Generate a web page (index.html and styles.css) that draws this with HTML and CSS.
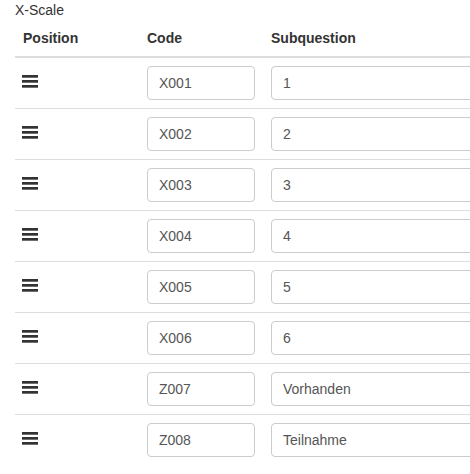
FILE: index.html
```html
<!DOCTYPE html>
<html>
<head>
<meta charset="utf-8">
<link rel="stylesheet" href="styles.css">
</head>
<body>
<div class="page">
  <table class="grid">
    <caption class="caption">X-Scale</caption>
    <colgroup>
      <col class="col-pos">
      <col class="col-code">
      <col class="col-sub">
    </colgroup>
    <thead>
      <tr>
        <th>Position</th>
        <th>Code</th>
        <th>Subquestion</th>
      </tr>
    </thead>
    <tbody>
      <tr>
        <td><svg class="handle" viewBox="0 0 16 13" width="16" height="13"><rect x="0" y="0" width="16" height="2.7"/><rect x="0" y="5" width="16" height="2.7"/><rect x="0" y="10" width="16" height="2.7"/></svg></td>
        <td><input class="field" type="text" value="X001"></td>
        <td><input class="field" type="text" value="1"></td>
      </tr>
      <tr>
        <td><svg class="handle" viewBox="0 0 16 13" width="16" height="13"><rect x="0" y="0" width="16" height="2.7"/><rect x="0" y="5" width="16" height="2.7"/><rect x="0" y="10" width="16" height="2.7"/></svg></td>
        <td><input class="field" type="text" value="X002"></td>
        <td><input class="field" type="text" value="2"></td>
      </tr>
      <tr>
        <td><svg class="handle" viewBox="0 0 16 13" width="16" height="13"><rect x="0" y="0" width="16" height="2.7"/><rect x="0" y="5" width="16" height="2.7"/><rect x="0" y="10" width="16" height="2.7"/></svg></td>
        <td><input class="field" type="text" value="X003"></td>
        <td><input class="field" type="text" value="3"></td>
      </tr>
      <tr>
        <td><svg class="handle" viewBox="0 0 16 13" width="16" height="13"><rect x="0" y="0" width="16" height="2.7"/><rect x="0" y="5" width="16" height="2.7"/><rect x="0" y="10" width="16" height="2.7"/></svg></td>
        <td><input class="field" type="text" value="X004"></td>
        <td><input class="field" type="text" value="4"></td>
      </tr>
      <tr>
        <td><svg class="handle" viewBox="0 0 16 13" width="16" height="13"><rect x="0" y="0" width="16" height="2.7"/><rect x="0" y="5" width="16" height="2.7"/><rect x="0" y="10" width="16" height="2.7"/></svg></td>
        <td><input class="field" type="text" value="X005"></td>
        <td><input class="field" type="text" value="5"></td>
      </tr>
      <tr>
        <td><svg class="handle" viewBox="0 0 16 13" width="16" height="13"><rect x="0" y="0" width="16" height="2.7"/><rect x="0" y="5" width="16" height="2.7"/><rect x="0" y="10" width="16" height="2.7"/></svg></td>
        <td><input class="field" type="text" value="X006"></td>
        <td><input class="field" type="text" value="6"></td>
      </tr>
      <tr>
        <td><svg class="handle" viewBox="0 0 16 13" width="16" height="13"><rect x="0" y="0" width="16" height="2.7"/><rect x="0" y="5" width="16" height="2.7"/><rect x="0" y="10" width="16" height="2.7"/></svg></td>
        <td><input class="field" type="text" value="Z007"></td>
        <td><input class="field" type="text" value="Vorhanden"></td>
      </tr>
      <tr>
        <td><svg class="handle" viewBox="0 0 16 13" width="16" height="13"><rect x="0" y="0" width="16" height="2.7"/><rect x="0" y="5" width="16" height="2.7"/><rect x="0" y="10" width="16" height="2.7"/></svg></td>
        <td><input class="field" type="text" value="Z008"></td>
        <td><input class="field" type="text" value="Teilnahme"></td>
      </tr>
    </tbody>
  </table>
</div>
</body>
</html>
```
FILE: styles.css
```css
html, body {
  margin: 0;
  padding: 0;
  overflow: hidden;
  background: #fff;
}
body {
  font-family: "Liberation Sans", Arial, sans-serif;
  font-size: 14px;
  line-height: 20px;
  color: #333;
}
.page {
  padding: 0 0 0 15px;
  width: 620px;
}
.grid {
  border-collapse: collapse;
  border-spacing: 0;
  width: 600px;
  table-layout: fixed;
}
.caption {
  caption-side: top;
  text-align: left;
  padding: 0;
  height: 20px;
  line-height: 20px;
  color: #333;
}
.col-pos { width: 124px; }
.col-code { width: 124px; }
.grid th {
  text-align: left;
  font-weight: bold;
  padding: 8px;
  line-height: 20px;
  border-bottom: 2px solid #ddd;
  vertical-align: bottom;
}
.grid td {
  padding: 8px;
  line-height: 20px;
  border-top: 1px solid #ddd;
  vertical-align: middle;
}
.grid tbody tr:first-child td {
  border-top: 0;
}
.handle {
  display: block;
  fill: #333;
  margin-left: -1px;
  margin-bottom: 3px;
}
.field {
  display: block;
  box-sizing: border-box;
  width: 100%;
  height: 34px;
  margin: 0;
  padding: 6px 12px 6px 11px;
  font-family: "Liberation Sans", Arial, sans-serif;
  font-size: 14px;
  line-height: 20px;
  color: #555;
  background: #fff;
  border: 1px solid #ccc;
  border-radius: 4px;
  outline: none;
}
```
